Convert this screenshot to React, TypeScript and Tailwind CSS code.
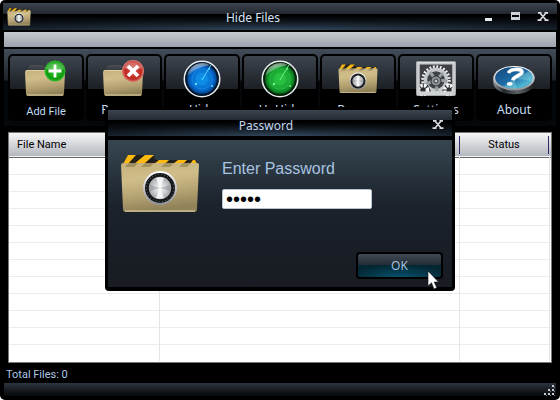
import React, { useState } from 'react';

interface ToolItem {
  label: string;
  icon: React.ReactNode;
  small?: boolean;
}

const Defs = () => (
  <svg className="absolute w-0 h-0" aria-hidden="true">
    <defs>
      <linearGradient id="folder" x1="0" y1="0" x2="0.2" y2="1">
        <stop offset="0" stopColor="#c4b07a" />
        <stop offset="0.35" stopColor="#d0be8a" />
        <stop offset="0.7" stopColor="#b5a272" />
        <stop offset="1" stopColor="#918259" />
      </linearGradient>
      <linearGradient id="tab" x1="0" y1="0" x2="0" y2="1">
        <stop offset="0" stopColor="#4a4f55" />
        <stop offset="1" stopColor="#1b1d20" />
      </linearGradient>
      <linearGradient id="silver" x1="0" y1="0" x2="0" y2="1">
        <stop offset="0" stopColor="#ffffff" />
        <stop offset="1" stopColor="#8d9196" />
      </linearGradient>
      <radialGradient id="green">
        <stop offset="0" stopColor="#3fd83a" />
        <stop offset="0.75" stopColor="#0c9a0c" />
        <stop offset="1" stopColor="#35bd30" />
      </radialGradient>
      <radialGradient id="red">
        <stop offset="0" stopColor="#d84a40" />
        <stop offset="0.75" stopColor="#bf2a24" />
        <stop offset="1" stopColor="#dd8378" />
      </radialGradient>
      <radialGradient id="radarBlue">
        <stop offset="0" stopColor="#0d9af0" />
        <stop offset="0.65" stopColor="#0568cc" />
        <stop offset="1" stopColor="#04234e" />
      </radialGradient>
      <radialGradient id="radarGreen">
        <stop offset="0" stopColor="#2fcc48" />
        <stop offset="0.65" stopColor="#139f2c" />
        <stop offset="1" stopColor="#053a12" />
      </radialGradient>
      <linearGradient id="gloss" x1="0" y1="0" x2="0.5" y2="1">
        <stop offset="0" stopColor="#fff" stopOpacity="0.7" />
        <stop offset="1" stopColor="#fff" stopOpacity="0.05" />
      </linearGradient>
      <linearGradient id="disc" x1="0" y1="0" x2="1" y2="1">
        <stop offset="0" stopColor="#12447a" />
        <stop offset="0.5" stopColor="#1d6ba4" />
        <stop offset="0.8" stopColor="#4fb8d4" />
        <stop offset="1" stopColor="#1c6c9c" />
      </linearGradient>
      <linearGradient id="discSide" x1="0" y1="0" x2="1" y2="0">
        <stop offset="0" stopColor="#8f9498" />
        <stop offset="0.25" stopColor="#25282b" />
        <stop offset="0.6" stopColor="#5c6266" />
        <stop offset="1" stopColor="#1b1d20" />
      </linearGradient>
      <radialGradient id="steel">
        <stop offset="0" stopColor="#ffffff" />
        <stop offset="0.5" stopColor="#d4d6d9" />
        <stop offset="1" stopColor="#a5a9ad" />
      </radialGradient>
    </defs>
  </svg>
);

const Folder = () => (
  <>
    <path d="M4 7 L5 3.5 L7 2 H19 L21 4.5 H38 Q40 4.5 40 7 V14 H4 Z" fill="url(#tab)" />
    <path d="M1 9 Q1 7 3 7 H39 Q41 7 41 9 L40 31 Q40 33 38 33 H4 Q2 33 2 31 Z" fill="url(#folder)" />
    <path d="M3 32 H39" stroke="#e6d8ac" strokeWidth="0.9" />
    <path d="M2 7.5 H40" stroke="#e9dcb4" strokeWidth="0.7" />
  </>
);

const AddIcon = () => (
  <svg viewBox="0 0 44 38" className="w-11 h-10">
    <g transform="translate(0 3)"><Folder /></g>
    <circle cx="31" cy="11" r="10.5" fill="url(#green)" />
    <path d="M22 9 a9.5 9.5 0 0 1 18 0 q-9 4 -18 0" fill="#fff" opacity="0.25" />
    <path d="M31 4.5 V17.5 M24.5 11 H37.5" stroke="#fff" strokeWidth="2.8" />
  </svg>
);

const RemoveIcon = () => (
  <svg viewBox="0 0 44 38" className="w-11 h-10">
    <g transform="translate(0 3)"><Folder /></g>
    <circle cx="31" cy="11" r="11" fill="url(#red)" />
    <path d="M22 8 a10 10 0 0 1 18 0 q-9 4 -18 0" fill="#fff" opacity="0.3" />
    <path d="M26 6 L36 16 M36 6 L26 16" stroke="#fff" strokeWidth="3.8" />
  </svg>
);

const Radar = ({ fill, glow }: { fill: string; glow: string }) => (
  <svg viewBox="0 0 38 38" className="size-[38px]">
    <circle cx="19" cy="19" r="17.7" fill={fill} stroke="#e9ecee" strokeWidth="1.6" />
    <circle cx="19" cy="19" r="15.8" fill="none" stroke="#000" strokeOpacity="0.6" strokeWidth="2" />
    <circle cx="19" cy="19" r="5" fill="none" stroke={glow} strokeOpacity="0.2" />
    <circle cx="19" cy="19" r="10" fill="none" stroke={glow} strokeOpacity="0.2" />
    <path d="M4 16 A15.5 15.5 0 0 1 27 5 Q14 7 4 16" fill="url(#gloss)" />
    <path d="M19 20 L28 5" stroke={glow} strokeWidth="1" />
    <circle cx="13" cy="24" r="1.3" fill={glow} />
    <circle cx="29" cy="26" r="1" fill={glow} />
    <circle cx="26" cy="9" r="1" fill={glow} />
  </svg>
);

const Safe = ({ className }: { className: string }) => (
  <svg viewBox="0 0 80 60" className={className} aria-hidden="true">
    <path d="M3 10 L8 1 H33 L36 6 H75 L77 12 H3 Z" fill="#23211e" />
    <path d="M8 1 H16 L8 10 H3 Z M25 1 H34 L24 10 H14 Z M39 6 H49 L45 10 H34 Z M58 6 H67 L63 10 H53 Z M73 6 H75 L77 10 H70 Z" fill="#fdb90f" />
    <path d="M1 11 Q1 9 3 9 H77 Q79 9 79 11 L77 55 Q77 58 74 58 H6 Q3 58 3 55 Z" fill="url(#folder)" />
    <path d="M9 9 H18 L14 13 H5 Z M25 9 H34 L30 13 H21 Z M45 9 H54 L50 13 H41 Z M63 9 H71 L67 13 H59 Z" fill="#5c4c28" opacity="0.35" />
    <path d="M5 57 H75" stroke="#e6d8ac" strokeWidth="1.2" />
    <circle cx="40" cy="34" r="17" fill="url(#silver)" />
    <circle cx="40" cy="34" r="15" fill="#141618" />
    <circle cx="40" cy="34" r="13.6" fill="none" stroke="#6b6f73" strokeWidth="1.2" strokeDasharray="0.7 2.4" />
    <circle cx="40" cy="34" r="11.2" fill="url(#steel)" />
    <path d="M40 34 L36 24 A11 11 0 0 1 44 24 Z M40 34 L44 44 A11 11 0 0 1 36 44 Z" fill="#fff" opacity="0.8" />
    <path d="M40 34 L30 37 A11 11 0 0 1 30 31 Z M40 34 L50 31 A11 11 0 0 1 50 37 Z" fill="#7d8287" opacity="0.4" />
  </svg>
);

const SettingsIcon = () => (
  <svg viewBox="0 0 40 36" className="w-10 h-9">
    <rect x="1" y="1" width="38" height="33" fill="#c9cccf" stroke="#eceeef" />
    <rect x="3.5" y="3.5" width="33" height="27" fill="#3c4044" />
    <circle cx="20" cy="19" r="13" fill="none" stroke="#eceeef" strokeWidth="3.4" strokeDasharray="1.8 1.6" />
    <circle cx="20" cy="19" r="10.5" fill="#3f4347" stroke="#c4c8cb" strokeWidth="3.4" />
    <path d="M20 19 L14 11 M20 19 L27 12 M20 19 L10 23 M20 19 L31 20 M20 19 L21 30" stroke="#9a9fa3" strokeWidth="3" />
    <circle cx="20" cy="20" r="5" fill="#8d9296" stroke="#303336" />
    <circle cx="20" cy="20" r="2" fill="#c4c8cb" stroke="#3a3d40" />
    <path d="M4 24 H12 L15 30.5 H4 Z M36 24 H29 L26 30.5 H36 Z" fill="#2c2f32" />
    <circle cx="7" cy="29" r="4.5" fill="none" stroke="#f4f5f6" strokeWidth="3.6" strokeDasharray="2.4 1.2" />
    <circle cx="33" cy="29" r="4.5" fill="none" stroke="#f4f5f6" strokeWidth="3.6" strokeDasharray="2.4 1.2" />
    <path d="M1 32.5 H39" stroke="#d0d3d6" strokeWidth="4" />
    <path d="M2 2 V33 M38 2 V33" stroke="#c9cccf" strokeWidth="3" />
  </svg>
);

const AboutIcon = () => (
  <svg viewBox="0 0 46 34" className="mt-1 w-[46px] h-8">
    <path d="M1 14 V19 C3 35 43 35 45 19 V14 Z" fill="url(#discSide)" />
    <ellipse cx="23" cy="14" rx="22" ry="13" fill="url(#silver)" />
    <ellipse cx="23" cy="13.5" rx="20" ry="11.5" fill="url(#disc)" />
    <path d="M23 14 L39 7 A19.5 11 0 0 1 42 17 Z M23 14 L12 23 A19.5 11 0 0 0 26 25 Z" fill="#a6eef0" opacity="0.3" />
    <path d="M17 8.5 C19 4 30 3.5 31.5 7 C32.5 10.5 23.5 11 21.5 16" stroke="#fff" strokeWidth="3.8" fill="none" />
    <ellipse cx="18.5" cy="20" rx="3" ry="2" fill="#fff" />
  </svg>
);

const tools: ToolItem[] = [
  { label: 'Add File', icon: <AddIcon />, small: true },
  { label: 'Remove', icon: <RemoveIcon /> },
  { label: 'Hide', icon: <Radar fill="url(#radarBlue)" glow="#5fd4ff" /> },
  { label: 'UnHide', icon: <Radar fill="url(#radarGreen)" glow="#6df08c" /> },
  { label: 'Browse', icon: <Safe className="w-10 h-8" /> },
  { label: 'Settings', icon: <SettingsIcon /> },
  { label: 'About', icon: <AboutIcon /> },
];

const CloseGlyph = () => (
  <svg viewBox="0 0 12 9" className="w-3 h-[9px]">
    <path d="M1 0.8 H4.5 M7.5 0.8 H11 M0.5 8.2 H4.5 M7.5 8.2 H11.5 M3 1 L9 8 M9 1 L3 8" stroke="#d6dae1" strokeWidth="1.7" fill="none" />
  </svg>
);

const TitleStrip = ({ children }: { children: React.ReactNode }) => (
  <div className="bg-black">
    <div className="h-[11px] bg-linear-to-b from-[#3b4550] to-[#23282e]" />
    <div className="h-4 bg-radial-[ellipse_60%_140%_at_50%_100%] from-[#33495f] to-[#111922]">
      <div className="h-full bg-linear-to-b from-black from-10% to-transparent">{children}</div>
    </div>
  </div>
);

const PasswordDialog = () => {
  const [password, setPassword] = useState('12345');

  return (
    <div
      role="dialog"
      aria-labelledby="dialog-title"
      className="relative w-[350px] bg-black rounded-[4px] p-[3px] pb-1"
    >
      <TitleStrip>
        <div className="-mt-px flex items-start justify-center pr-2">
          <h2 id="dialog-title" className="flex-1 pr-2 text-center text-xs leading-none font-['Noto_Sans',sans-serif] text-[#c3d6ee]">
            Password
          </h2>
          <button aria-label="Close dialog" className="flex"><CloseGlyph /></button>
        </div>
      </TitleStrip>
      <form
        onSubmit={(e) => e.preventDefault()}
        className="mt-1 pt-3.5 pl-3 pr-[9px] pb-2 bg-linear-to-b from-[#364752] via-[#1b222b] via-45% to-[#181b22]"
      >
        <div className="flex gap-[22px]">
          <Safe className="w-20 h-[60px]" />
          <div className="pt-[3px]">
            <label htmlFor="password" className="block text-base leading-6 text-[#a9c4e0] font-['Liberation_Sans',sans-serif]">
              Enter Password
            </label>
            <input
              id="password"
              type="password"
              value={password}
              onChange={(e) => setPassword(e.target.value)}
              className="block mt-2 w-[150px] h-5 px-[3px] bg-white border border-[#b9c4d0] rounded-[2px] text-black text-xl leading-none font-['Liberation_Sans',sans-serif] outline-none"
            />
          </div>
        </div>
        <div className="mt-[38px] flex justify-end">
          <button
            type="submit"
            className="w-[87px] h-[27px] rounded-[4px] border-2 border-black bg-linear-to-b from-[#414a54] from-0% via-[#202b32] via-50% to-[#06222c] to-50% text-xs font-['Noto_Sans',sans-serif] text-[#a4bfdc] relative overflow-hidden"
          >
            <span className="absolute inset-x-0 bottom-0 h-3 bg-radial-[ellipse_60%_100%_at_50%_100%] from-[#04506c] to-[#042733]" />
            <span className="relative">OK</span>
          </button>
        </div>
      </form>
      <svg viewBox="0 0 12 20" className="absolute right-4 bottom-px w-3 h-5">
        <path d="M1 1 V16 L4.5 12.8 L7 19 L9.8 17.8 L7.2 12 H11.5 Z" fill="#fff" stroke="#111" strokeWidth="0.6" />
      </svg>
    </div>
  );
};

const App: React.FC = () => {
  return (
    <div className="bg-white">
      <Defs />
      <div className="relative min-h-screen flex flex-col bg-black rounded-[5px] font-['Roboto',sans-serif] text-[11px] overflow-hidden">
        <header className="pt-[3px] px-[3px]">
          <TitleStrip>
            <div className="relative flex items-start justify-between pl-1 pr-2">
              <Safe className="-mt-1.5 w-6 h-[18px]" />
              <h1 className="absolute inset-x-0 -top-1 pr-[54px] text-center text-xs leading-4 font-['Noto_Sans',sans-serif] text-[#d6e4f4]">
                Hide Files
              </h1>
              <div className="relative -mt-0.5 flex gap-[14px]">
                <button aria-label="Minimize" className="flex items-end w-3 h-[9px]">
                  <span className="w-[7px] h-[3px] bg-[#e6e9ee]" />
                </button>
                <button aria-label="Maximize" className="flex w-3 h-[9px]">
                  <span className="w-[9px] h-2 border border-y-[3px] border-[#cdd1d9]" />
                </button>
                <button aria-label="Close" className="flex"><CloseGlyph /></button>
              </div>
            </div>
          </TitleStrip>
        </header>

        <div className="mx-1 mt-0.5 h-[15px] bg-linear-to-b from-[#c6c9ce] to-[#9da1ad]" />

        <nav className="mx-1 mt-0.5 px-1 pt-[5px] pb-[5px] grid grid-cols-7 gap-0.5 bg-linear-to-b from-[#434e5b] from-0% via-[#1d2228] via-40% to-[#05080b] to-42%">
          {tools.map((tool) => (
            <button
              key={tool.label}
              className="h-[67px] rounded-[5px] border-2 border-black bg-linear-to-b from-[#3d454f] from-0% via-[#1c2025] via-52% to-black to-52% flex flex-col items-center"
            >
              <span className="h-[46px] flex items-center justify-center">{tool.icon}</span>
              {tool.small ? (
                <span className="mt-1 leading-3 text-[#c3dcf6]">{tool.label}</span>
              ) : (
                <span className="text-xs leading-4 font-['Noto_Sans',sans-serif] text-[#c8dcf2]">{tool.label}</span>
              )}
            </button>
          ))}
        </nav>

        <main className="mx-2 mt-1.5 flex-1 bg-white border border-[#777]">
          <table className="w-full table-fixed border-collapse">
            <colgroup>
              <col className="w-[150px]" />
              <col />
              <col className="w-[90px]" />
              <col className="w-0.5" />
            </colgroup>
            <thead>
              <tr className="h-6 bg-linear-to-b from-[#f6f6f7] to-[#b4b7be] border-b border-[#666]">
                <th className="pl-2 text-left font-normal text-black">File Name</th>
                <th />
                <th className="p-0 font-normal text-black">
                  <span className="block border-x border-[#2c2c66] leading-[18px]">Status</span>
                </th>
                <th />
              </tr>
            </thead>
            <tbody>
              {Array.from({ length: 12 }).map((_, i) => (
                <tr key={i} className="h-[17px] border-b border-[#ececee] last:border-b-0">
                  <td className="border-r border-[#e4e4e6]" />
                  <td className="border-r border-[#e4e4e6]" />
                  <td className="border-r border-[#e4e4e6]" />
                  <td />
                </tr>
              ))}
            </tbody>
          </table>
        </main>

        <p className="px-1.5 pt-1 leading-4 text-[#a9c6e4]">Total Files: 0</p>

        <footer className="mx-1 mb-1 h-[13px] bg-linear-to-b from-[#2c353f] to-[#08090b] flex justify-end items-end">
          <svg viewBox="0 0 12 12" className="size-3">
            <path d="M8 1h2v2h-2z M4 5h2v2h-2z M8 5h2v2h-2z M0 9h2v2h-2z M4 9h2v2h-2z M8 9h2v2h-2z" fill="#c9ccd4" />
            <path d="M10 3h1v1h-1z M6 7h1v1h-1z M10 7h1v1h-1z M2 11h1v1h-1z M6 11h1v1h-1z M10 11h1v1h-1z" fill="#777b84" />
          </svg>
        </footer>

        <div className="absolute inset-0 pb-0.5 flex items-center justify-center">
          <PasswordDialog />
        </div>
      </div>
    </div>
  );
};

export default App;
